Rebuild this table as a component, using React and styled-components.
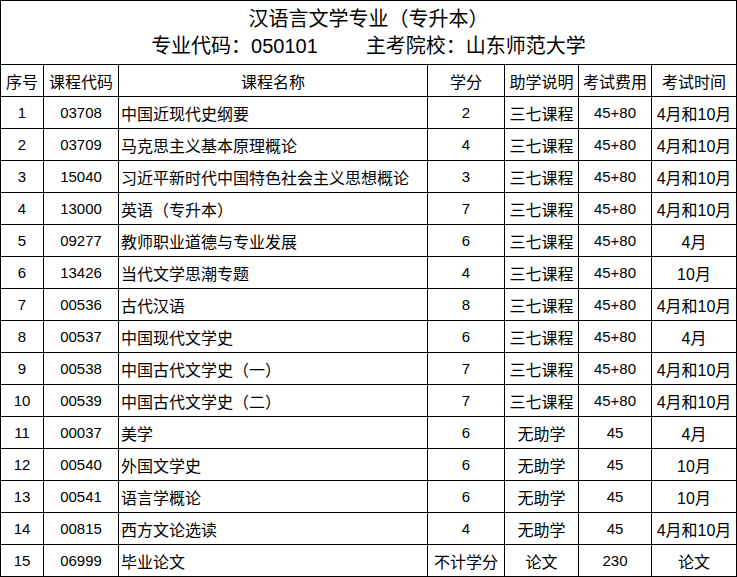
import React from 'react';
import styled, { createGlobalStyle } from 'styled-components';

const GlobalStyle = createGlobalStyle`
  html, body {
    margin: 0;
    padding: 0;
    background: #fff;
  }
  body {
    font-family: "Liberation Sans", "Noto Sans CJK SC", sans-serif;
    color: #000;
  }
`;

const Table = styled.table`
  width: 736px;
  border-collapse: collapse;
  table-layout: fixed;
`;

const TitleCell = styled.td`
  height: 63px;
  border: 1px solid #000;
  text-align: center;
  padding: 0;
  vertical-align: middle;
`;

const TitleLine = styled.div`
  font-size: 20px;
  line-height: 27px;
`;

const SchoolPart = styled.span`
  margin-left: ${(p) => p.$gap || 0}px;
`;

const Row = styled.tr`
  height: 32px;
`;

const Head = styled.th`
  border: 1px solid #000;
  font-weight: 400;
  font-size: 16px;
  padding: 0;
  text-align: center;
  white-space: nowrap;
`;

const Cell = styled.td`
  border: 1px solid #000;
  font-size: ${(p) => (p.$num ? '15px' : '16px')};
  padding: 0 ${(p) => (p.$left ? '2px' : '0')};
  text-align: ${(p) => (p.$left ? 'left' : 'center')};
  white-space: nowrap;
  overflow: hidden;
`;

const widths = [43, 75, 309, 77, 74, 73, 85];

const rows = [
  ['1', '03708', '中国近现代史纲要', '2', '三七课程', '45+80', '4月和10月'],
  ['2', '03709', '马克思主义基本原理概论', '4', '三七课程', '45+80', '4月和10月'],
  ['3', '15040', '习近平新时代中国特色社会主义思想概论', '3', '三七课程', '45+80', '4月和10月'],
  ['4', '13000', '英语（专升本）', '7', '三七课程', '45+80', '4月和10月'],
  ['5', '09277', '教师职业道德与专业发展', '6', '三七课程', '45+80', '4月'],
  ['6', '13426', '当代文学思潮专题', '4', '三七课程', '45+80', '10月'],
  ['7', '00536', '古代汉语', '8', '三七课程', '45+80', '4月和10月'],
  ['8', '00537', '中国现代文学史', '6', '三七课程', '45+80', '4月'],
  ['9', '00538', '中国古代文学史（一）', '7', '三七课程', '45+80', '4月和10月'],
  ['10', '00539', '中国古代文学史（二）', '7', '三七课程', '45+80', '4月和10月'],
  ['11', '00037', '美学', '6', '无助学', '45', '4月'],
  ['12', '00540', '外国文学史', '6', '无助学', '45', '10月'],
  ['13', '00541', '语言学概论', '6', '无助学', '45', '10月'],
  ['14', '00815', '西方文论选读', '4', '无助学', '45', '4月和10月'],
  ['15', '06999', '毕业论文', '不计学分', '论文', '230', '论文'],
];

const heads = ['序号', '课程代码', '课程名称', '学分', '助学说明', '考试费用', '考试时间'];

const isNum = (s) => /^[0-9+]+$/.test(s);

export default function App() {
  return (
    <>
      <GlobalStyle />
      <Table>
        <colgroup>
          {widths.map((w, i) => (
            <col key={i} style={{ width: w }} />
          ))}
        </colgroup>
        <tbody>
          <tr>
            <TitleCell colSpan={7}>
              <TitleLine>汉语言文学专业（专升本）</TitleLine>
              <TitleLine>
                <span>专业代码：050101</span>
                <SchoolPart $gap={48}>主考院校：山东师范大学</SchoolPart>
              </TitleLine>
            </TitleCell>
          </tr>
          <Row>
            {heads.map((h) => (
              <Head key={h}>{h}</Head>
            ))}
          </Row>
          {rows.map((r) => (
            <Row key={r[0]}>
              {r.map((c, i) => (
                <Cell key={i} $left={i === 2} $num={isNum(c)}>
                  {c}
                </Cell>
              ))}
            </Row>
          ))}
        </tbody>
      </Table>
    </>
  );
}
